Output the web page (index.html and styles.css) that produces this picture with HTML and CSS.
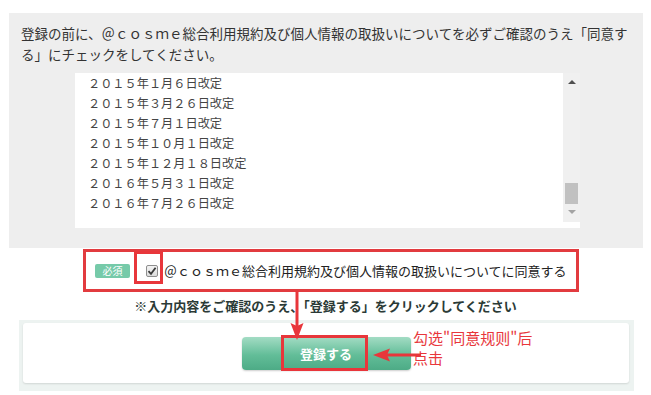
FILE: index.html
```html
<!DOCTYPE html>
<html lang="ja">
<head>
    <meta charset="UTF-8">
    <meta name="viewport" content="width=device-width, initial-scale=1.0">
    <title>会員登録</title>
    <link rel="stylesheet" href="styles.css">
</head>
<body>
    <div class="terms-panel">
        <p class="intro">登録の前に、＠ｃｏｓｍｅ総合利用規約及び個人情報の取扱いについてを必ずご確認のうえ「同意する」にチェックをしてください。</p>
        <div class="terms-box">
            <div class="terms-text">
                <p>２０１５年１月６日改定</p>
                <p>２０１５年３月２６日改定</p>
                <p>２０１５年７月１日改定</p>
                <p>２０１５年１０月１日改定</p>
                <p>２０１５年１２月１８日改定</p>
                <p>２０１６年５月３１日改定</p>
                <p>２０１６年７月２６日改定</p>
            </div>
            <div class="scrollbar">
                <span class="arrow-up"></span>
                <span class="thumb"></span>
                <span class="arrow-down"></span>
            </div>
        </div>
    </div>

    <div class="agree-row">
        <span class="badge">必須</span>
        <span class="check-wrap">
            <span class="checkbox">
                <svg width="10" height="10" viewBox="0 0 10 10"><path d="M1.5 5.2 L4 7.8 L8.6 1.8" fill="none" stroke="#3a3a3a" stroke-width="1.8"/></svg>
            </span>
            <span class="mark-frame"></span>
        </span>
        <label class="agree-label">＠ｃｏｓｍｅ総合利用規約及び個人情報の取扱いについてに同意する</label>
    </div>

    <p class="notice">※入力内容をご確認のうえ、「登録する」をクリックしてください</p>

    <div class="card-wrap">
        <div class="card">
            <button class="submit">登録する<span class="mark-frame btn-frame"></span></button>
            <svg class="arrow-left" width="48" height="16" viewBox="0 0 48 16">
                <path d="M0 8 L17 1.5 L14 8 L17 14.5 Z" fill="#e8363b"/>
                <line x1="14" y1="8" x2="48" y2="8" stroke="#e8363b" stroke-width="3"/>
            </svg>
            <div class="note">勾选"同意规则"后<br>点击</div>
        </div>
    </div>

    <svg class="arrow-down-mark" width="14" height="50" viewBox="0 0 14 50">
        <line x1="7" y1="0" x2="7" y2="36" stroke="#e8363b" stroke-width="3"/>
        <path d="M0.5 32 L7 49 L13.5 32 L7 35 Z" fill="#e8363b"/>
    </svg>
</body>
</html>
```

FILE: styles.css
```css
body {
    margin: 0;
    padding: 0;
    position: relative;
    background: #fff;
    font-family: "Noto Sans CJK JP", "Noto Sans", sans-serif;
    color: #333;
}

p {
    margin: 0;
}

.terms-panel {
    box-sizing: border-box;
    margin: 13px 0 0 9px;
    width: 634px;
    height: 235px;
    padding: 10px 10px 0 12px;
    background: #eeeeee;
}

.intro {
    font-size: 13.5px;
    line-height: 21px;
    color: #333;
}

.terms-box {
    display: flex;
    box-sizing: border-box;
    margin: 8px 0 0 54px;
    width: 505px;
    height: 155px;
    padding-bottom: 6px;
    background: #fff;
}

.terms-text {
    flex: 1;
    padding: 0 13px;
    font-size: 12.2px;
    line-height: 20px;
    color: #444;
    overflow: hidden;
}

.scrollbar {
    width: 17px;
    background: #f0f0f0;
    display: flex;
    flex-direction: column;
    align-items: center;
}

.arrow-up {
    margin-top: 7px;
    width: 0;
    height: 0;
    border-left: 4px solid transparent;
    border-right: 4px solid transparent;
    border-bottom: 4px solid #505050;
}

.thumb {
    margin-top: 99px;
    width: 13px;
    height: 21px;
    background: #c1c1c1;
}

.arrow-down {
    margin-top: 6px;
    width: 0;
    height: 0;
    border-left: 4px solid transparent;
    border-right: 4px solid transparent;
    border-top: 4px solid #a3a3a3;
}

.agree-row {
    display: flex;
    align-items: center;
    box-sizing: border-box;
    margin: 1px 0 0 83px;
    width: 496px;
    height: 43px;
    padding-left: 9px;
    border: 3px solid #e23b3f;
}

.badge {
    width: 35px;
    height: 14px;
    line-height: 14px;
    border-radius: 2px;
    background: #76caa9;
    color: #fff;
    font-size: 10px;
    text-align: center;
}

.check-wrap {
    position: relative;
    margin-left: 16px;
    width: 12px;
    height: 12px;
}

.checkbox {
    display: flex;
    align-items: center;
    justify-content: center;
    box-sizing: border-box;
    width: 12px;
    height: 12px;
    border: 1px solid #8e8e8e;
    border-radius: 2px;
    background: linear-gradient(#f4f4f4, #dcdcdc);
}

.mark-frame {
    position: absolute;
    left: -12px;
    top: -14px;
    width: 23px;
    height: 27px;
    border: 3px solid #e8363b;
}

.agree-label {
    margin-left: 6px;
    font-size: 13px;
    color: #222;
}

.notice {
    margin-top: 5px;
    text-align: center;
    font-size: 13px;
    line-height: 18px;
    font-weight: bold;
    color: #2b3a36;
}

.card-wrap {
    margin: 5px 0 0 19px;
    width: 615px;
    padding: 3px 5px 8px 4px;
    box-sizing: border-box;
    background: #edf3f1;
}

.card {
    position: relative;
    box-sizing: border-box;
    height: 60px;
    padding-top: 14px;
    border-radius: 3px;
    background: #fff;
    box-shadow: 0 1px 2px rgba(0, 0, 0, 0.12);
}

.submit {
    position: relative;
    display: block;
    margin: 0 auto;
    width: 169px;
    height: 33px;
    border: none;
    border-radius: 4px;
    background: linear-gradient(to bottom, #a3dcc4, #62bd98 55%, #4dab86);
    box-shadow: 0 1px 2px rgba(0, 0, 0, 0.2);
    color: #fff;
    font-family: "Noto Sans CJK JP", sans-serif;
    font-size: 13px;
    font-weight: bold;
    cursor: pointer;
}

.btn-frame {
    left: 39px;
    top: -2px;
    width: 81px;
    height: 30px;
}

.arrow-left {
    position: absolute;
    left: 350px;
    top: 24px;
}

.note {
    position: absolute;
    left: 390px;
    top: 5px;
    font-family: "Noto Sans CJK SC", sans-serif;
    font-size: 15px;
    line-height: 20px;
    color: #e8363b;
}

.arrow-down-mark {
    position: absolute;
    left: 290px;
    top: 291px;
}
```
